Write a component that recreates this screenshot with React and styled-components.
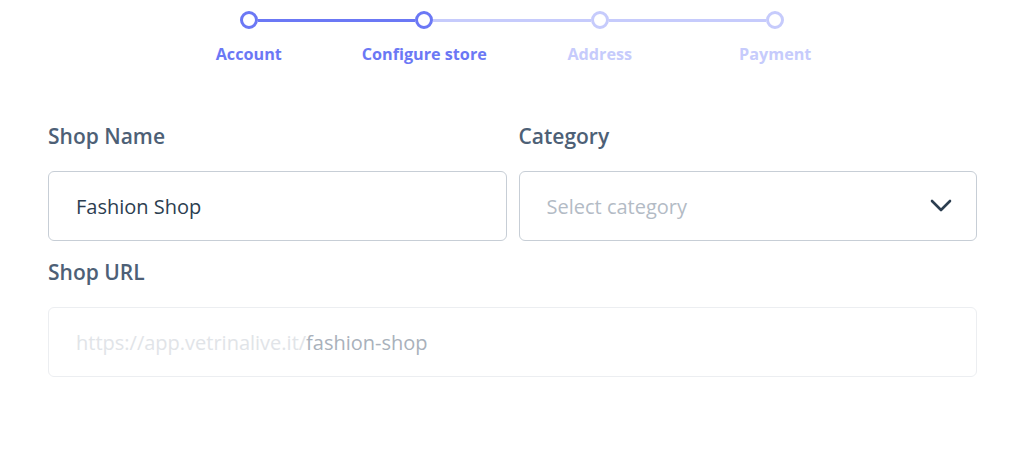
import React from 'react'
import styled, { createGlobalStyle } from 'styled-components'

const GlobalStyle = createGlobalStyle`
  body {
    margin: 0;
    background: #ffffff;
    font-family: "Open Sans", Lato, sans-serif;
  }
`

const steps = ['Account', 'Configure store', 'Address', 'Payment']
const ACTIVE = 1

const DARK = '#6b78f5'
const LIGHT = '#c6cbfc'

function App() {
  return (
    <>
      <GlobalStyle />
      <Page>
        <Stepper>
          {steps.map((label, i) => (
            <Step key={label}>
              <Track>
                <Line $hidden={i === 0} $on={i <= ACTIVE} />
                <Dot $on={i <= ACTIVE} />
                <Line $hidden={i === steps.length - 1} $on={i < ACTIVE} />
              </Track>
              <StepLabel $on={i <= ACTIVE}>{label}</StepLabel>
            </Step>
          ))}
        </Stepper>

        <Form>
          <Row>
            <Field>
              <Label>Shop Name</Label>
              <Input defaultValue="Fashion Shop" />
            </Field>
            <Field>
              <Label>Category</Label>
              <Select>
                <Placeholder>Select category</Placeholder>
                <svg width="22" height="14" viewBox="0 0 22 14" fill="none">
                  <path d="M2 2l9 9 9-9" stroke="#2c3e50" strokeWidth="2.6" strokeLinecap="round" strokeLinejoin="round" />
                </svg>
              </Select>
            </Field>
          </Row>
          <Field>
            <Label $spaced>Shop URL</Label>
            <UrlBox>
              <Prefix>https://app.vetrinalive.it/</Prefix>
              <Slug>fashion-shop</Slug>
            </UrlBox>
          </Field>
        </Form>
      </Page>
    </>
  )
}

const Page = styled.div`
  padding-top: 11px;
`

const Stepper = styled.div`
  width: 702px;
  margin: 0 auto;
  display: grid;
  grid-template-columns: repeat(4, 1fr);
`

const Step = styled.div`
  display: flex;
  flex-direction: column;
  align-items: center;
`

const Track = styled.div`
  width: 100%;
  height: 18px;
  display: flex;
  align-items: center;
`

const Line = styled.div`
  flex: 1;
  height: 3px;
  background: ${p => (p.$hidden ? 'transparent' : p.$on ? DARK : LIGHT)};
`

const Dot = styled.div`
  width: 18px;
  height: 18px;
  box-sizing: border-box;
  border-radius: 50%;
  border: 3px solid ${p => (p.$on ? DARK : LIGHT)};
  background: #fff;
`

const StepLabel = styled.div`
  margin-top: 15px;
  font-size: 16.2px;
  line-height: 20px;
  font-weight: 700;
  color: ${p => (p.$on ? DARK : LIGHT)};
  white-space: nowrap;
`

const Form = styled.div`
  padding: 60px 47px 0 48px;
`

const Row = styled.div`
  display: grid;
  grid-template-columns: 1fr 1fr;
  gap: 12px;
`

const Field = styled.div`
  display: flex;
  flex-direction: column;
`

const Label = styled.div`
  font-size: 21px;
  line-height: 24px;
  font-weight: 600;
  color: #4d6076;
  margin: ${p => (p.$spaced ? '19px' : '0')} 0 23px;
`

const boxBase = `
  box-sizing: border-box;
  height: 70px;
  border-radius: 6px;
  background: #fff;
  padding: 0 27px;
  font-family: "Open Sans", Lato, sans-serif;
  font-size: 20px;
`

const Input = styled.input`
  ${boxBase}
  width: 100%;
  border: 1.5px solid #c7ced6;
  color: #2c3e50;
  outline: none;
`

const Select = styled.div`
  ${boxBase}
  border: 1.5px solid #c7ced6;
  display: flex;
  align-items: center;
  justify-content: space-between;
  padding-right: 24px;
`

const Placeholder = styled.span`
  color: #b3bbc5;
`

const UrlBox = styled.div`
  ${boxBase}
  border: 1.5px solid #eceef1;
  display: flex;
  align-items: center;
`

const Prefix = styled.span`
  color: #e1e4e8;
`

const Slug = styled.span`
  color: #a9b1bb;
`

export default App
